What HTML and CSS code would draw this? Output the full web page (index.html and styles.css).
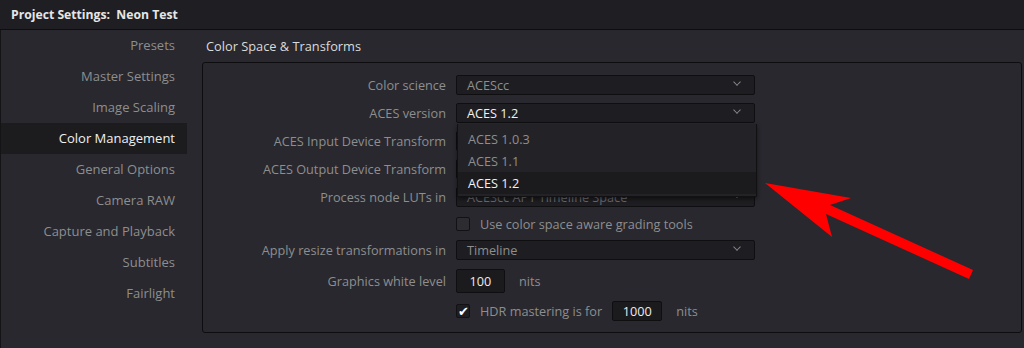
FILE: index.html
```html
<!DOCTYPE html>
<html lang="en">
<head>
  <meta charset="UTF-8">
  <meta name="viewport" content="width=device-width, initial-scale=1.0">
  <title>Project Settings</title>
  <link rel="stylesheet" href="styles.css">
</head>
<body>

  <div class="titlebar">Project Settings:&nbsp; Neon Test</div>

  <div class="main">
    <div class="sidebar">
      <div class="nav-item">Presets</div>
      <div class="nav-item">Master Settings</div>
      <div class="nav-item">Image Scaling</div>
      <div class="nav-item active">Color Management</div>
      <div class="nav-item">General Options</div>
      <div class="nav-item">Camera RAW</div>
      <div class="nav-item">Capture and Playback</div>
      <div class="nav-item">Subtitles</div>
      <div class="nav-item">Fairlight</div>
    </div>

    <div class="content">
      <h2>Color Space &amp; Transforms</h2>

      <div class="group">
        <div class="label">Color science</div>
        <div class="select"><span>ACEScc</span><span class="chev"></span></div>

        <div class="label">ACES version</div>
        <div class="select open">
          <span class="bright">ACES 1.2</span><span class="chev"></span>
          <div class="popup">
            <div class="option">ACES 1.0.3</div>
            <div class="option">ACES 1.1</div>
            <div class="option current">ACES 1.2</div>
          </div>
        </div>

        <div class="label">ACES Input Device Transform</div>
        <div class="select"><span class="chev"></span></div>

        <div class="label">ACES Output Device Transform</div>
        <div class="select"><span class="chev"></span></div>

        <div class="label">Process node LUTs in</div>
        <div class="select"><span class="faded">ACEScc AP1 Timeline Space</span><span class="chev"></span></div>

        <div class="label"></div>
        <div class="check-row"><span class="checkbox"></span>Use color space aware grading tools</div>

        <div class="label">Apply resize transformations in</div>
        <div class="select"><span>Timeline</span><span class="chev"></span></div>

        <div class="label">Graphics white level</div>
        <div class="inline-row"><span class="num tall">100</span>nits</div>

        <div class="label"></div>
        <div class="check-row">
          <span class="checkbox checked">&#10004;</span>HDR mastering is for
          <span class="num">1000</span>nits
        </div>
      </div>
    </div>
  </div>

  <svg class="arrow" width="1024" height="348" viewBox="0 0 1024 348">
    <polygon points="765,183 851,198 830,205 973,270 969,279 826,214 832,237" fill="#ff0000"/>
  </svg>

</body>
</html>
```

FILE: styles.css
```css
body {
  margin: 0;
  width: 1024px;
  height: 348px;
  overflow: hidden;
  background: #28282e;
  font-family: "Open Sans", "Noto Sans", sans-serif;
  font-size: 13px;
  color: #8e8e8e;
}

.titlebar {
  height: 29px;
  line-height: 29px;
  padding-left: 11px;
  background: #1f1f23;
  border-bottom: 1px solid #0e0e10;
  color: #e6e6e6;
  font-size: 12.2px;
  font-weight: bold;
}

.main {
  display: flex;
  height: 318px;
  border-left: 1px solid #141417;
}

.sidebar {
  width: 186px;
}

.nav-item {
  height: 31px;
  line-height: 31px;
  text-align: right;
  padding-right: 12px;
}

.nav-item.active {
  background: #1c1c1f;
  color: #f0f0f0;
}

.content {
  flex: 1;
  padding-left: 15px;
}

h2 {
  margin: 0;
  height: 32px;
  line-height: 32px;
  padding-left: 4px;
  font-size: 12.8px;
  font-weight: normal;
  color: #dadada;
}

.group {
  position: relative;
  margin-right: 2px;
  border: 1px solid #0d0d0f;
  border-radius: 3px;
  padding: 8px 0 9px;
  display: grid;
  grid-template-columns: 243px 1fr;
  grid-template-rows: 28px 28px 28px 28px 28px 26px 26px 36px 24px;
  column-gap: 10px;
  font-size: 12.7px;
}

.label {
  text-align: right;
  align-self: center;
}

.select {
  position: relative;
  align-self: center;
  height: 18px;
  line-height: 18px;
  padding: 0 0 0 10px;
  width: 287px;
  background: #1e1e22;
  border: 1px solid #0f0f11;
  border-radius: 2px;
  display: flex;
  justify-content: space-between;
  color: #8e8e8e;
}

.faded {
  color: #6a6a70;
}

.bright {
  color: #f2f2f2;
}

.chev {
  width: 6px;
  height: 6px;
  margin: 3px 14px 0 auto;
  border-right: 1.5px solid #8a8a8a;
  border-bottom: 1.5px solid #8a8a8a;
  transform: rotate(45deg) scale(0.9);
  box-sizing: border-box;
}

.popup {
  position: absolute;
  top: 20px;
  left: 0;
  width: 298px;
  padding: 4px 0 2px;
  background: #232327;
  border: 1px solid #111113;
  border-top: none;
  border-radius: 0 0 2px 2px;
  box-shadow: 0 2px 4px rgba(0, 0, 0, 0.5);
  z-index: 2;
}

.option {
  height: 22px;
  line-height: 22px;
  padding-left: 10px;
  color: #8e8e8e;
}

.option.current {
  background: #1b1b1e;
  color: #f2f2f2;
}

.check-row,
.inline-row {
  display: flex;
  align-items: center;
}

.checkbox {
  width: 14px;
  height: 14px;
  margin-right: 10px;
  background: #2c2c31;
  border: 1px solid #121215;
  border-radius: 2px;
  box-sizing: border-box;
  color: #ffffff;
  font-size: 13px;
  line-height: 12px;
  text-align: center;
}

.checkbox.checked {
  background: #1e1e22;
}

.num {
  width: 50px;
  height: 20px;
  line-height: 18px;
  margin: 0 14px 0 10px;
  box-sizing: border-box;
  background: #1b1b1e;
  border: 1px solid #0f0f11;
  border-radius: 2px;
  text-align: center;
  color: #ececec;
}

.num.tall {
  height: 24px;
  line-height: 22px;
  width: 49px;
  margin-left: 0;
}

.arrow {
  position: absolute;
  top: 0;
  left: 0;
  pointer-events: none;
}
```
